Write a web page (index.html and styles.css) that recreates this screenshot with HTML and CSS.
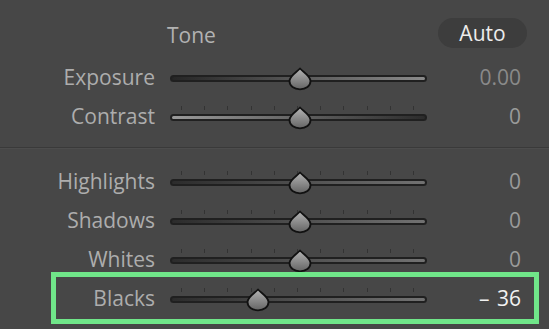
FILE: index.html
```html
<!DOCTYPE html>
<html>
<head>
  <link rel="stylesheet" href="styles.css">
</head>
<body>
  <div class="panel">
    <div class="panel-header">
      <div class="panel-title">Tone</div>
      <button class="auto-btn">Auto</button>
    </div>

    <div class="row">
      <div class="row-label">Exposure</div>
      <div class="slider">
        <div class="track track-exposure"></div>
        <svg class="thumb" style="left:117.5px" width="24" height="24" viewBox="0 0 24 24"><use href="#drop"/></svg>
      </div>
      <div class="row-value dim">0.00</div>
    </div>

    <div class="row">
      <div class="row-label">Contrast</div>
      <div class="slider">
        <div class="ticks"><i></i><i></i><i></i><i></i><i></i><i></i><i></i><i></i><i></i><i></i><i></i></div>
        <div class="track track-contrast"></div>
        <svg class="thumb" style="left:117.5px" width="24" height="24" viewBox="0 0 24 24"><use href="#drop"/></svg>
      </div>
      <div class="row-value">0</div>
    </div>

    <div class="divider"></div>

    <div class="row">
      <div class="row-label">Highlights</div>
      <div class="slider">
        <div class="ticks"><i></i><i></i><i></i><i></i><i></i><i></i><i></i><i></i><i></i><i></i><i></i></div>
        <div class="track"></div>
        <svg class="thumb" style="left:117.5px" width="24" height="24" viewBox="0 0 24 24"><use href="#drop"/></svg>
      </div>
      <div class="row-value">0</div>
    </div>

    <div class="row">
      <div class="row-label">Shadows</div>
      <div class="slider">
        <div class="ticks"><i></i><i></i><i></i><i></i><i></i><i></i><i></i><i></i><i></i><i></i><i></i></div>
        <div class="track"></div>
        <svg class="thumb" style="left:117.5px" width="24" height="24" viewBox="0 0 24 24"><use href="#drop"/></svg>
      </div>
      <div class="row-value">0</div>
    </div>

    <div class="row">
      <div class="row-label">Whites</div>
      <div class="slider">
        <div class="ticks"><i></i><i></i><i></i><i></i><i></i><i></i><i></i><i></i><i></i><i></i><i></i></div>
        <div class="track"></div>
        <svg class="thumb" style="left:117.5px" width="24" height="24" viewBox="0 0 24 24"><use href="#drop"/></svg>
      </div>
      <div class="row-value">0</div>
    </div>

    <div class="row row-marked">
      <div class="row-label">Blacks</div>
      <div class="slider">
        <div class="ticks"><i></i><i></i><i></i><i></i><i></i><i></i><i></i><i></i><i></i><i></i><i></i></div>
        <div class="track"></div>
        <svg class="thumb" style="left:75.7px" width="24" height="24" viewBox="0 0 24 24"><use href="#drop"/></svg>
      </div>
      <div class="row-value bright">&ndash; 36</div>
    </div>
  </div>

  <!-- shared slider thumb -->
  <svg class="defs" width="0" height="0">
    <defs>
      <linearGradient id="dropFill" x1="0" y1="0" x2="0" y2="1">
        <stop offset="0" stop-color="#b4b4b4"/>
        <stop offset="1" stop-color="#646464"/>
      </linearGradient>
      <path id="drop" d="M12 1.5 C14.8 4.8 22.5 8.8 22.5 14 C22.5 19 18 22.3 12 22.3 C6 22.3 1.5 19 1.5 14 C1.5 8.8 9.2 4.8 12 1.5 Z" fill="url(#dropFill)" stroke="#111" stroke-width="1.8" stroke-linejoin="round"/>
    </defs>
  </svg>
</body>
</html>
```

FILE: styles.css
```css
body {
  margin: 0;
  width: 549px;
  height: 329px;
  overflow: hidden;
  background: #474747;
  font-family: "Open Sans", sans-serif;
}
.panel {
  padding-top: 18px;
}
/* Header */
.panel-header {
  display: flex;
  align-items: center;
  justify-content: space-between;
  height: 30px;
  padding: 0 22px 11px 167px;
}
.panel-title {
  font-size: 21px;
  color: #b2b2b2;
  padding-top: 4px;
}
.auto-btn {
  width: 89px;
  height: 30px;
  border: none;
  border-radius: 15px;
  background: #3d3d3d;
  color: #ececec;
  font-family: inherit;
  font-size: 21px;
  line-height: 30px;
  padding: 0;
}
/* Slider rows */
.row {
  display: grid;
  grid-template-columns: 155px 257px 1fr;
  column-gap: 15px;
  align-items: center;
  height: 39px;
  padding-right: 28px;
}
.row-label {
  text-align: right;
  font-size: 21px;
  line-height: 24px;
  margin-top: -3px;
  color: #adadad;
}
.row-value {
  text-align: right;
  font-size: 21px;
  line-height: 24px;
  margin-top: -3px;
  color: #9a9a9a;
}
.row-value.dim {
  color: #8a8a8a;
}
.row-value.bright {
  color: #f2f2f2;
  word-spacing: 2px;
}
.slider {
  position: relative;
  height: 39px;
  display: flex;
  flex-direction: column;
  justify-content: center;
}
.track {
  height: 3px;
  border: 2px solid #202020;
  border-radius: 4px;
  background: linear-gradient(90deg, #2c2c2c, #727272);
}
.track-exposure {
  background: linear-gradient(90deg, #262626, #8a8a8a);
}
.track-contrast {
  background: linear-gradient(90deg, #9a9a9a, #2c2c2c);
}
.ticks {
  position: absolute;
  left: 11px;
  right: 13px;
  top: 8px;
  display: flex;
  justify-content: space-between;
}
.ticks i {
  width: 1px;
  height: 4px;
  background: #333;
}
.thumb {
  position: absolute;
  top: 8px;
}
.divider {
  height: 1px;
  background: #3a3a3a;
  border-bottom: 1px solid #4d4d4d;
  margin: 10px 0 14px;
}
/* Highlight frame around the Blacks row */
.row-marked {
  position: relative;
}
.row-marked:after {
  content: "";
  position: absolute;
  left: 51px;
  right: 10px;
  top: -8px;
  bottom: -5px;
  border: 5px solid #70e689;
}
.defs {
  position: absolute;
}
```
